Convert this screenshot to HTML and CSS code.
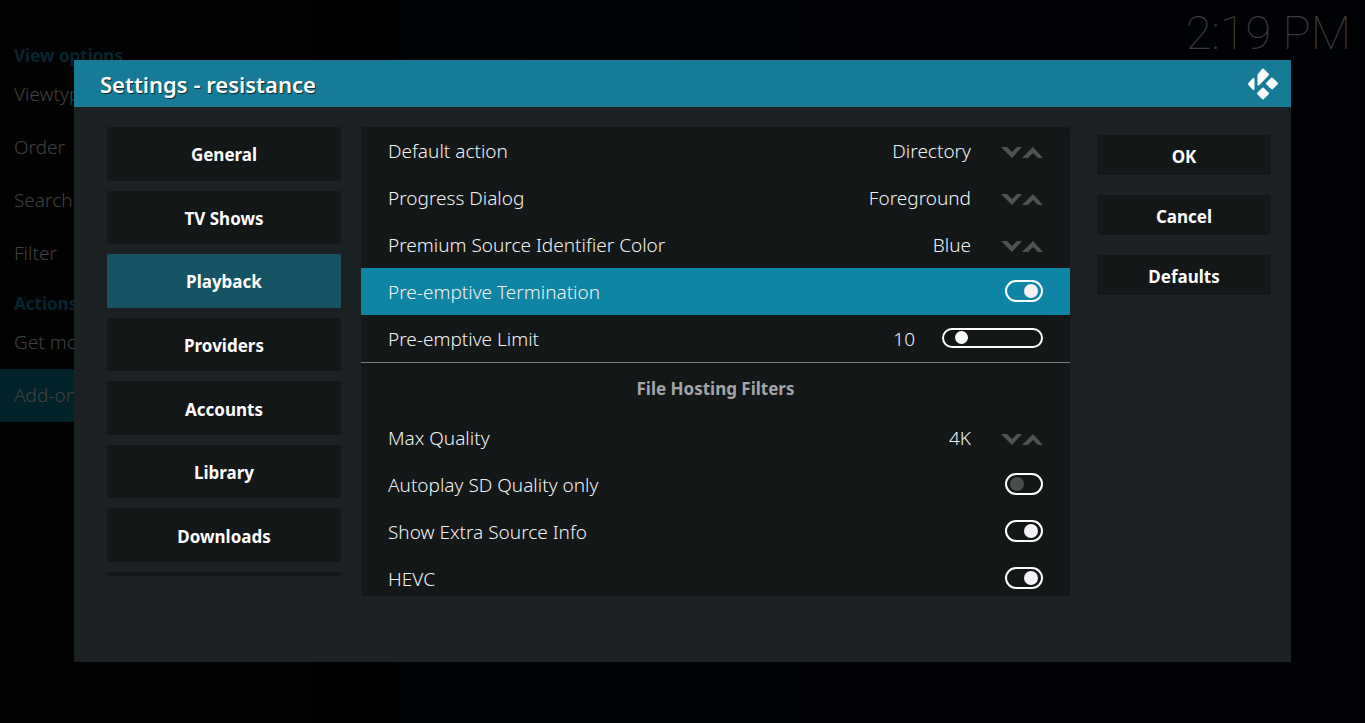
FILE: index.html
```html
<!DOCTYPE html>
<html lang="en">
<head>
    <meta charset="UTF-8">
    <meta name="viewport" content="width=device-width, initial-scale=1.0">
    <title>Settings - resistance</title>
    <link rel="stylesheet" href="styles.css">
</head>
<body>
    <aside class="sidebar">
        <h2>View options</h2>
        <a href="#">Viewtype</a>
        <a href="#">Order</a>
        <a href="#">Search</a>
        <a href="#">Filter</a>
        <h2>Actions</h2>
        <a href="#">Get more</a>
        <a href="#" class="current">Add-on</a>
    </aside>

    <time class="clock">2:19 PM</time>

    <div class="overlay">
        <div class="dialog" role="dialog" aria-labelledby="title">
            <header class="dialog-header">
                <h1 id="title">Settings - resistance</h1>
                <svg class="logo" viewBox="0 0 32 34" aria-hidden="true">
                    <path d="M2 17 6.5 12V22Z"/>
                    <path d="M11.5 8 16 2.5 21 7.5 11.5 17.5Z"/>
                    <path d="M25 11.5 30 16.5 25 21.5 20 16.5Z"/>
                    <path d="M16 21.5 21 26.5 16 31.5 11 26.5Z"/>
                </svg>
            </header>

            <div class="dialog-body">
                <nav class="categories">
                    <button type="button">General</button>
                    <button type="button">TV Shows</button>
                    <button type="button" class="active">Playback</button>
                    <button type="button">Providers</button>
                    <button type="button">Accounts</button>
                    <button type="button">Library</button>
                    <button type="button">Downloads</button>
                    <button type="button" aria-label="More"></button>
                </nav>

                <form class="settings">
                    <div class="row">
                        <label for="action">Default action</label>
                        <output id="action">Directory</output>
                        <div class="spinner">
                            <button type="button" aria-label="Next action"><svg viewBox="0 0 21 12"><path d="M0 0H6L11 5 16 0H21L11 11Z"/></svg></button>
                            <button type="button" aria-label="Previous action"><svg viewBox="0 0 21 12"><path d="M0 11H6L11 6 16 11H21L11 0Z"/></svg></button>
                        </div>
                    </div>
                    <div class="row">
                        <label for="progress">Progress Dialog</label>
                        <output id="progress">Foreground</output>
                        <div class="spinner">
                            <button type="button" aria-label="Next dialog"><svg viewBox="0 0 21 12"><path d="M0 0H6L11 5 16 0H21L11 11Z"/></svg></button>
                            <button type="button" aria-label="Previous dialog"><svg viewBox="0 0 21 12"><path d="M0 11H6L11 6 16 11H21L11 0Z"/></svg></button>
                        </div>
                    </div>
                    <div class="row">
                        <label for="color">Premium Source Identifier Color</label>
                        <output id="color">Blue</output>
                        <div class="spinner">
                            <button type="button" aria-label="Next color"><svg viewBox="0 0 21 12"><path d="M0 0H6L11 5 16 0H21L11 11Z"/></svg></button>
                            <button type="button" aria-label="Previous color"><svg viewBox="0 0 21 12"><path d="M0 11H6L11 6 16 11H21L11 0Z"/></svg></button>
                        </div>
                    </div>
                    <div class="row focused">
                        <label for="termination">Pre-emptive Termination</label>
                        <input type="checkbox" class="toggle" id="termination" checked>
                    </div>
                    <div class="row">
                        <label for="limit">Pre-emptive Limit</label>
                        <output class="limit-value" for="limit">10</output>
                        <input type="range" class="slider" id="limit" min="0" max="100" value="10">
                    </div>

                    <h2 class="group-title">File Hosting Filters</h2>

                    <div class="row">
                        <label for="quality">Max Quality</label>
                        <output id="quality">4K</output>
                        <div class="spinner">
                            <button type="button" aria-label="Next quality"><svg viewBox="0 0 21 12"><path d="M0 0H6L11 5 16 0H21L11 11Z"/></svg></button>
                            <button type="button" aria-label="Previous quality"><svg viewBox="0 0 21 12"><path d="M0 11H6L11 6 16 11H21L11 0Z"/></svg></button>
                        </div>
                    </div>
                    <div class="row">
                        <label for="autoplay">Autoplay SD Quality only</label>
                        <input type="checkbox" class="toggle" id="autoplay">
                    </div>
                    <div class="row">
                        <label for="extra">Show Extra Source Info</label>
                        <input type="checkbox" class="toggle" id="extra" checked>
                    </div>
                    <div class="row">
                        <label for="hevc">HEVC</label>
                        <input type="checkbox" class="toggle" id="hevc" checked>
                    </div>
                </form>

                <div class="actions">
                    <button type="button">OK</button>
                    <button type="button">Cancel</button>
                    <button type="button">Defaults</button>
                </div>
            </div>
        </div>
    </div>

    <script>
        const limit = document.getElementById('limit');

        limit.addEventListener('input', () => {
            document.querySelector('.limit-value').textContent = limit.value;
        });
    </script>
</body>
</html>
```
FILE: styles.css
```css
* {
    margin: 0;
    padding: 0;
    box-sizing: border-box;
}

body {
    min-height: 100vh;
    overflow: hidden;
    background: linear-gradient(to right, #000 390px, #000307 410px, #000205 70%, #000104);
    color: #f0f2f2;
    font-family: 'Noto Sans', sans-serif;
    font-size: 19px;
    font-weight: 300;
}

button {
    border: none;
    font: inherit;
    color: inherit;
    cursor: pointer;
}

/* Dimmed window behind the dialog */
.sidebar {
    width: 314px;
    min-height: 100vh;
    padding-top: 40px;
    background: #020202;
}

.sidebar h2 {
    padding-left: 14px;
    color: #05252e;
    font-size: 17px;
    line-height: 32px;
    font-weight: 700;
}

.sidebar a {
    display: block;
    padding-left: 14px;
    color: #404040;
    line-height: 53px;
    text-decoration: none;
}

.sidebar h2 + a {
    margin-top: -4px;
}

.sidebar a + h2 {
    padding-top: 8px;
}

.sidebar .current {
    background: #02222a;
}

.clock {
    position: absolute;
    top: 5px;
    right: 14px;
    color: #3c3a3c;
    font-family: Roboto, sans-serif;
    font-size: 47px;
    line-height: 56px;
    font-weight: 100;
}

/* Dialog */
.overlay {
    position: fixed;
    inset: 0;
    display: flex;
    padding: 60px 74px;
}

.dialog {
    flex: 1;
    margin-bottom: 1px;
    background: #1b2123;
}

.dialog-header {
    display: flex;
    align-items: center;
    justify-content: space-between;
    height: 47px;
    padding: 0 12px 0 26px;
    background: #167b97;
    color: #fff;
}

.dialog-header h1 {
    font-size: 22px;
    font-weight: 600;
    text-shadow: 1px 1px 1px #0a2c36;
}

.logo {
    width: 32px;
    height: 34px;
    fill: #fff;
    stroke: #fff;
    stroke-width: 2;
    stroke-linejoin: round;
}

.dialog-body {
    display: grid;
    grid-template-columns: 234px 1fr 174px;
    align-items: start;
    padding: 20px 20px 0 33px;
}

.categories {
    display: grid;
    grid-template-rows: repeat(7, 1fr) 4px;
    gap: 10px;
    height: 449px;
}

.categories button,
.actions button {
    padding-top: 2px;
    border-radius: 2px;
    background: #141718;
    color: #fff;
    font-size: 17px;
    font-weight: 700;
}

.categories .active {
    background: #165364;
}

.settings {
    height: 469px;
    margin: 0 27px 0 20px;
    overflow: hidden;
    border-radius: 3px;
    background: #141718;
}

.row {
    display: flex;
    align-items: center;
    height: 47px;
    padding: 0 27px;
}

.row label {
    flex: 1;
}

.row label,
.row output {
    line-height: 47px;
    padding-top: 1px;
}

.row.focused {
    background: #0f85a5;
}

.spinner {
    display: flex;
    margin: 4px 0 0 30px;
}

.spinner button {
    display: flex;
    background: none;
}

.spinner svg {
    width: 21px;
    height: 12px;
    fill: #505354;
}

.toggle {
    appearance: none;
    display: flex;
    align-items: center;
    width: 38px;
    height: 22px;
    margin-bottom: 2px;
    padding: 0 3px;
    border: 2px solid #fff;
    border-radius: 11px;
}

.toggle::before {
    content: '';
    width: 14px;
    height: 14px;
    border-radius: 50%;
    background: #4a4c4d;
}

.toggle:checked {
    justify-content: flex-end;
}

.toggle:checked::before {
    background: #f5f3f7;
}

.slider {
    appearance: none;
    width: 101px;
    height: 20px;
    margin: 0 0 2px 27px;
    padding: 0 3px;
    border: 2px solid #fff;
    border-radius: 10px;
    background: none;
}

.slider::-webkit-slider-thumb {
    appearance: none;
    width: 13px;
    height: 13px;
    border-radius: 50%;
    background: #fff;
}

.group-title {
    height: 52px;
    border-top: 1px solid #787b7c;
    color: #a3a5a6;
    font-size: 17px;
    line-height: 52px;
    font-weight: 700;
    text-align: center;
}

.actions {
    display: grid;
    gap: 20px;
    padding-top: 8px;
}

.actions button {
    height: 40px;
}
```
